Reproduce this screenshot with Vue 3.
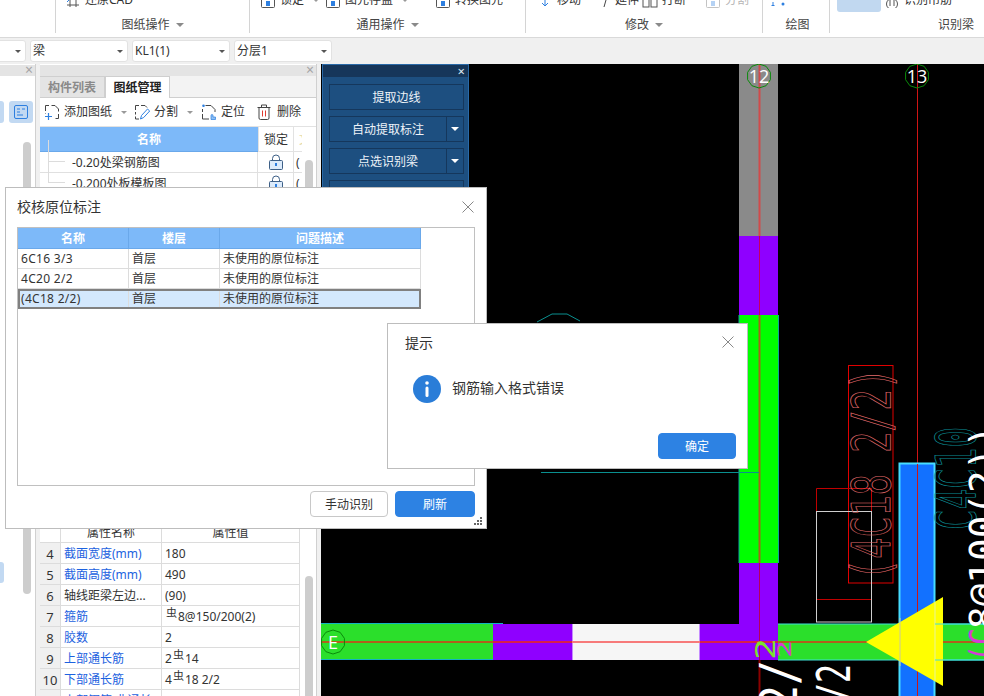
<script setup>
const ribbonGroups = [
  { name: 'undo', width: 56, label: '', items: [] },
  { name: 'drawing', width: 194, label: '图纸操作', caret: true, items: [{ icon: 'restore', text: '还原CAD', left: 9 }] },
  { name: 'common', width: 276, label: '通用操作', caret: true, items: [
    { icon: 'lock', text: '锁定', left: 10, more: true },
    { icon: 'store', text: '图元存盘', left: 75, more: true },
    { icon: 'swap', text: '转换图元', left: 185 }
  ] },
  { name: 'edit', width: 237, label: '修改', caret: true, items: [
    { icon: 'move', text: '移动', left: 11 },
    { icon: 'extend', text: '延伸', left: 69 },
    { icon: 'break', text: '打断', left: 116 },
    { icon: 'split', text: '分割', left: 179, off: true }
  ] },
  { name: 'draw', width: 67, label: '绘图', items: [{ icon: 'dots', text: '', left: 7 }] },
  { name: 'beam', width: 154, label: '识别梁', right: true, items: [{ icon: 'hanger', text: '识别吊筋', left: 54 }] }
]

const selects = [
  { text: '' },
  { text: '梁' },
  { text: 'KL1(1)' },
  { text: '分层1' }
]

const drawings = ['-0.20处梁钢筋图', '-0.200处板模板图']

const props = [
  { no: 4, name: '截面宽度(mm)', link: true, value: ['180'] },
  { no: 5, name: '截面高度(mm)', link: true, value: ['490'] },
  { no: 6, name: '轴线距梁左边...', value: ['(90)'] },
  { no: 7, name: '箍筋', link: true, value: ['', '8@150/200(2)'] },
  { no: 8, name: '胶数', link: true, value: ['2'] },
  { no: 9, name: '上部通长筋', link: true, value: ['2', '14'] },
  { no: 10, name: '下部通长筋', link: true, value: ['4', '18 2/2'] },
  { no: 11, name: '上部钢筋(非通长)', link: true, value: [''] }
]

const checks = [
  { name: '6C16 3/3', floor: '首层', issue: '未使用的原位标注' },
  { name: '4C20 2/2', floor: '首层', issue: '未使用的原位标注' },
  { name: '(4C18 2/2)', floor: '首层', issue: '未使用的原位标注', active: true }
]

const beamButtons = [
  { text: '提取边线' },
  { text: '自动提取标注', split: true },
  { text: '点选识别梁', split: true },
  { text: '' }
]

function bubble(cx, cy, r, n = 10) {
  const pts = []
  for (let i = 0; i < n; i++) {
    const a = (Math.PI * 2 * i) / n + Math.PI / n
    pts.push(`${(cx + r * Math.cos(a)).toFixed(1)},${(cy + r * Math.sin(a)).toFixed(1)}`)
  }
  return pts.join(' ')
}

const axes = [
  { x: 759, y: 76, label: '12' },
  { x: 917, y: 76, label: '13' },
  { x: 333, y: 642, label: 'E' }
]
</script>

<template>
  <div class="app">
    <header class="ribbon">
      <section
        v-for="g in ribbonGroups"
        :key="g.name"
        class="rib-group"
        :style="{ width: g.width + 'px' }"
      >
        <div class="rib-top">
          <span
            v-for="it in g.items"
            :key="it.icon"
            class="rib-item"
            :class="{ off: it.off }"
            :style="{ left: it.left + 'px' }"
          >
            <svg class="rib-ico" viewBox="0 0 16 16" fill="none" stroke="#555">
              <template v-if="it.icon === 'dots'">
                <path d="M3 11v4M1.500 14.500h3" stroke="#2d7fe0" />
                <circle cx="13" cy="13" r="1.500" fill="#2d7fe0" stroke="none" />
              </template>
              <template v-else-if="it.icon === 'extend'">
                <path d="M13 1 9 15" stroke="#444" />
              </template>
              <template v-else-if="it.icon === 'move'">
                <path d="M8 2v12M5 11l3 3 3-3" stroke="#2d7fe0" />
                <path d="M2 3h12" stroke="#777" />
              </template>
              <template v-else-if="it.icon === 'restore'">
                <path d="M2 13h12M5 15V7h6v8" />
                <path d="M2 10l3-3" stroke="#2d7fe0" />
              </template>
              <template v-else-if="it.icon === 'hanger'">
                <circle cx="8" cy="12" r="5.500" />
                <path d="M6 8v6M10 8v6" />
              </template>
              <template v-else-if="it.icon === 'break'">
                <rect x="1" y="4" width="6" height="11" />
                <rect x="9" y="4" width="6" height="11" />
              </template>
              <template v-else>
                <rect x="1.500" y="4.500" width="13" height="11" rx="1" />
                <rect x="6" y="9" width="4" height="5" fill="#2d7fe0" stroke="none" />
              </template>
            </svg>
            <span v-if="it.text" class="rib-text">{{ it.text }}</span>
            <i v-if="it.more" class="caret mini" />
          </span>
          <span v-if="g.name === 'beam'" class="rib-big" />
        </div>
        <div class="rib-label" :class="[{ right: g.right }, g.name]">
          {{ g.label }}<i v-if="g.caret" class="caret" />
        </div>
      </section>
    </header>

    <div class="selects">
      <div v-for="(s, i) in selects" :key="i" class="select">
        <span>{{ s.text }}</span><i class="caret dark" />
      </div>
    </div>

    <main class="work">
      <aside class="pane-left">
        <div class="pane-head"><span class="pane-x">×</span></div>
        <div class="left-tools">
          <span class="tool-chip cut" />
          <span class="tool-chip">
            <svg width="16" height="16" viewBox="0 0 16 16" fill="none" stroke="#2d7fe0">
              <rect x="1.500" y="1.500" width="13" height="13" rx="1.500" />
              <path d="M4 5h3M9 5h3M4 8h3M4 11h6" />
            </svg>
          </span>
        </div>
        <div class="left-scroll" />
        <div class="left-sel" />
      </aside>

      <div class="pane-mid">
        <div class="pane-head"><span class="pane-x">×</span></div>
        <div class="tabs">
          <span class="tab">构件列表</span>
          <span class="tab on">图纸管理</span>
        </div>
        <div class="mid-tools">
          <span class="mt mt-add">
            <svg width="16" height="16" viewBox="0 0 16 16" fill="none" stroke="#444">
              <path d="M1.500 7V1.500H5M7.500 1.500H11L14.500 5V7.500M14.500 10V14.500H11.500M1.500 9.500V10" />
              <path d="M1 12.500h7M4.500 9v7" stroke="#2d7fe0" stroke-width="1.200" />
            </svg>
            添加图纸<i class="caret mini" />
          </span>
          <span class="mt mt-split">
            <svg width="16" height="16" viewBox="0 0 16 16" fill="none" stroke="#444">
              <path d="M1.500 6V1.500H5M7 1.500H11L13 3.500M1.500 8V10.500M1.500 12.500V15H5" />
              <path d="M6.500 15l1-3.500 6-6.500 2.200 2-6 6.500z" stroke="#2d7fe0" />
            </svg>
            分割<i class="caret mini" />
          </span>
          <span class="mt mt-loc">
            <svg width="16" height="16" viewBox="0 0 16 16" fill="none" stroke="#444">
              <path d="M1.500 5V8M1.500 10V15H8M4.500 1.500H10L14 5.500V8" />
              <path d="M10 15v-3.500a1 1 0 0 1 2 0V13h2.500v2.500H10z" fill="#8ec0f5" stroke="#2d7fe0" stroke-width=".7" />
              <circle cx="2.500" cy="1.800" r="1.300" fill="#2d7fe0" stroke="none" />
            </svg>
            定位
          </span>
          <span class="mt mt-del">
            <svg width="14" height="16" viewBox="0 0 14 16" fill="none" stroke="#444">
              <path d="M.5 3.500h13M4.500 3.500V1h5v2.500M2 3.500v10.500a1.500 1.500 0 0 0 1.500 1.500h7a1.500 1.500 0 0 0 1.500-1.500V3.500" />
              <path d="M5.500 6.500v6M8.500 6.500v6" stroke="#e03c32" />
            </svg>
            删除
          </span>
        </div>
        <div class="sheet">
          <div class="sheet-head">
            <span class="sh-name">名称</span>
            <span class="sh-lock">锁定</span>
            <span class="sh-rest">文</span>
          </div>
          <div v-for="d in drawings" :key="d" class="sheet-row">
            <span class="sr-name"><i class="tree" />{{ d }}</span>
            <span class="sr-lock">
              <svg width="14" height="16" viewBox="0 0 14 16" fill="none" stroke="#3d5f86">
                <path d="M3.500 6.500V4.500a3.500 3.500 0 0 1 7 0v2" />
                <rect x=".5" y="6.500" width="13" height="9" rx="1" fill="#dcebfb" />
                <path d="M7 9v3" stroke="#2d7fe0" stroke-width="2" />
              </svg>
            </span>
            <span class="sr-rest">(</span>
          </div>
          <div class="sheet-scroll" />
        </div>
        <div class="prop-table">
          <div class="prop-row prop-head">
            <span class="p-no" />
            <span class="p-name">属性名称</span>
            <span class="p-val">属性值</span>
          </div>
          <div v-for="p in props" :key="p.no" class="prop-row">
            <span class="p-no">{{ p.no }}</span>
            <span class="p-name" :class="{ link: p.link }">{{ p.name }}</span>
            <span class="p-val">{{ p.value[0] }}<template v-if="p.value.length > 1"><sup class="rebar">虫</sup>{{ p.value[1] }}</template></span>
          </div>
          <div class="prop-scroll" />
        </div>
      </div>

      <div class="cad">
        <svg class="cad-svg" viewBox="321 64 663 632" width="663" height="632">
          <rect x="321" y="64" width="663" height="632" fill="#000" />
          <!-- wall -->
          <rect x="739" y="64" width="39" height="172" fill="#8a8a8a" />
          <rect x="739" y="236" width="39" height="79" fill="#8f00ff" />
          <rect x="739" y="315" width="39" height="248" fill="#00ff00" />
          <path d="M739 315V563M778.500 315V563" stroke="#0f9f9f" />
          <path d="M739 563H778V660H700V624H739Z" fill="#8f00ff" />
          <!-- beam -->
          <rect x="321" y="624" width="172" height="36" fill="#2bdf2b" />
          <path d="M321 623.500H503M321 659.500H503" stroke="#12b5c0" />
          <rect x="493" y="624" width="79" height="36" fill="#8f00ff" />
          <rect x="572" y="624" width="128" height="36" fill="#f6f6f6" />
          <path d="M572.500 624V660M699.500 624V660" stroke="#c58cff" />
          <rect x="778" y="624" width="206" height="36" fill="#2bdf2b" />
          <path d="M778 624H984M778 660H984" stroke="#3fe0d8" />
          <!-- axis lines -->
          <path d="M321 642H493" stroke="#b0601c" stroke-width="2" />
          <path d="M493 642H572M700 642H778" stroke="#d6204a" stroke-width="2" />
          <path d="M572 642H700" stroke="#f77a7a" stroke-width="2" />
          <path d="M778 642H984" stroke="#b0601c" stroke-width="2" />
          <path d="M759.500 64V236" stroke="#d14a4a" stroke-width="2" />
          <path d="M759.500 236V315" stroke="#c4005c" />
          <path d="M759.500 315V563" stroke="#a8601a" stroke-width="2" />
          <path d="M759.500 563V660" stroke="#b4005a" />
          <path d="M759.500 660V696" stroke="#8b0000" stroke-width="2" />
          <!-- teal leftovers -->
          <polyline points="537,322 552,314 567,314 580,321" fill="none" stroke="#0a8f8f" />
          <path d="M541 472.500H759" stroke="#0a8f8f" />
          <!-- detail boxes -->
          <rect x="848.500" y="365.500" width="44.500" height="217.500" fill="none" stroke="#e00000" />
          <path d="M816.500 511V488.500H871.500V511" fill="none" stroke="#c00000" />
          <rect x="816.500" y="511.500" width="55" height="110.500" fill="none" stroke="#cfcfcf" />
          <path d="M817 599.500H871" stroke="#c00000" />
          <path d="M917.500 64V463" stroke="#d01414" />
          <text class="cad-mono" transform="translate(890 580) rotate(-90)" font-size="54" textLength="212" lengthAdjust="spacingAndGlyphs" fill="none" stroke="#e06a6a" stroke-width=".8">(4C18 2/2)</text>
          <!-- column -->
          <rect x="899.500" y="463.500" width="35" height="240" fill="#1271ff" stroke="#46dcff" stroke-width="2" />
          <path d="M917.500 464V696" stroke="#d01414" />
          <path d="M866 642L943 597V686Z" fill="#ffff00" />
          <path d="M900 618V666" stroke="#c8c8a0" />
          <path d="M935 602V681" stroke="#e8f59a" />
          <path d="M935 624H984M935 660H984" stroke="#3fe0d8" />
          <!-- annotations -->
          <text class="cad-mono" transform="translate(975 530) rotate(-90)" font-size="56" textLength="103" lengthAdjust="spacingAndGlyphs" fill="none" stroke="#0c8f96" stroke-width=".8">C4C10</text>
          <text class="cad-mono" transform="translate(996 629) rotate(-90)" font-size="38" textLength="204" lengthAdjust="spacingAndGlyphs" fill="#fff">8@100(2))</text>
          <text class="cad-mono" transform="translate(996 662) rotate(-90)" font-size="38" textLength="34" lengthAdjust="spacingAndGlyphs" fill="#d63ad6">(C</text>
          <text class="cad-mono" transform="translate(775 660) rotate(-90)" font-size="26" textLength="22" lengthAdjust="spacingAndGlyphs" fill="#7be32c">2</text>
          <text class="cad-mono" transform="translate(791 658) rotate(-90)" font-size="20" textLength="18" lengthAdjust="spacingAndGlyphs" fill="#d63ad6">2</text>
          <text class="cad-mono" transform="translate(797 710) rotate(-90)" font-size="52" textLength="50" lengthAdjust="spacingAndGlyphs" fill="#fff">2/</text>
          <text class="cad-mono" transform="translate(850 702) rotate(-90)" font-size="46" textLength="38" lengthAdjust="spacingAndGlyphs" fill="#fff">/2</text>
          <!-- axis bubbles -->
          <g v-for="a in axes" :key="a.label">
            <polygon :points="bubble(a.x, a.y, 12)" fill="none" stroke="#0a8a0a" />
            <text class="cad-axis" :x="a.x" :y="a.y + 6.500" text-anchor="middle" fill="#fff">{{ a.label }}</text>
          </g>
        </svg>

        <div class="beam-panel">
          <div class="bp-head"><span>×</span></div>
          <div v-for="(b, i) in beamButtons" :key="i" class="bp-btn">
            <span class="bp-text">{{ b.text }}</span>
            <span v-if="b.split" class="bp-arrow"><i /></span>
          </div>
        </div>
      </div>
    </main>

    <div class="dlg dlg-check">
      <div class="dlg-title">校核原位标注</div>
      <svg class="dlg-x" width="12" height="12" viewBox="0 0 12 12" stroke="#888"><path d="M.5.5l11 11M11.500.5l-11 11" /></svg>
      <div class="grid-box">
        <div class="chk-row chk-head">
          <span>名称</span><span>楼层</span><span>问题描述</span>
        </div>
        <div v-for="c in checks" :key="c.name" class="chk-row" :class="{ active: c.active }">
          <span class="chk-name">{{ c.name }}</span><span>{{ c.floor }}</span><span>{{ c.issue }}</span>
        </div>
      </div>
      <div class="dlg-foot">
        <button class="btn">手动识别</button>
        <button class="btn primary">刷新</button>
      </div>
      <svg class="grip" width="9" height="9" viewBox="0 0 9 9" fill="#666">
        <rect x="6" y="0" width="2" height="2" />
        <rect x="3" y="3" width="2" height="2" /><rect x="6" y="3" width="2" height="2" />
        <rect x="0" y="6" width="2" height="2" /><rect x="3" y="6" width="2" height="2" /><rect x="6" y="6" width="2" height="2" />
      </svg>
    </div>

    <div class="dlg dlg-tip">
      <div class="dlg-title">提示</div>
      <svg class="dlg-x" width="12" height="12" viewBox="0 0 12 12" stroke="#888"><path d="M.5.5l11 11M11.500.5l-11 11" /></svg>
      <div class="tip-body">
        <svg width="28" height="28" viewBox="0 0 28 28">
          <circle cx="14" cy="14" r="14" fill="#2a7dd8" />
          <circle cx="14" cy="8" r="1.800" fill="#fff" />
          <rect x="12.500" y="11.500" width="3" height="10.500" rx="1.500" fill="#fff" />
        </svg>
        <span class="tip-msg">钢筋输入格式错误</span>
      </div>
      <button class="btn primary tip-ok">确定</button>
    </div>
  </div>
</template>

<style>
html, body { margin: 0; background: #f0f0f0; }
</style>

<style scoped>
.app {
  position: relative;
  width: 984px;
  height: 696px;
  overflow: hidden;
  display: flex;
  flex-direction: column;
  background: #f0f0f0;
  color: #333;
  font: 12px/18px "Noto Sans", "Noto Sans CJK SC", sans-serif;
}
.ribbon {
  display: flex;
  height: 37px;
  flex: none;
  background: #fff;
  border-bottom: 1px solid #d9d9d9;
}
.rib-group {
  position: relative;
  box-sizing: border-box;
  height: 33px;
  border-right: 1px solid #d4d4d4;
}
.rib-group:last-child { border-right: 0; }
.rib-top {
  position: relative;
  height: 14px;
  overflow: hidden;
}
.rib-item {
  position: absolute;
  top: -9px;
  display: flex;
  align-items: center;
  gap: 4px;
  white-space: nowrap;
}
.rib-item.off { color: #b5b5b5; }
.rib-item.off .rib-ico { opacity: .35; }
.rib-ico { width: 16px; height: 16px; flex: none; }
.rib-big {
  position: absolute;
  left: 7px;
  top: 0;
  width: 44px;
  height: 12px;
  background: #c1d8f0;
  border-radius: 0 0 3px 3px;
}
.rib-label {
  position: absolute;
  left: 0;
  right: 0;
  top: 16px;
  text-align: center;
  color: #444;
}
.rib-label.draw { padding-left: 3px; }
.rib-label.right { text-align: right; padding-right: 10px; }
.caret {
  display: inline-block;
  width: 0;
  height: 0;
  margin-left: 6px;
  vertical-align: 2px;
  border: 4px solid transparent;
  border-top: 4px solid #8a8a8a;
  border-bottom: 0;
}
.caret.mini {
  margin-left: 5px;
  border-width: 3px 3px 0;
  border-top-color: #999;
}
.caret.dark {
  border-width: 3px 3px 0;
  border-top-color: #555;
}
.selects {
  display: flex;
  gap: 4px;
  height: 26px;
  flex: none;
  box-sizing: border-box;
  padding-top: 2px;
  margin-left: -72px;
}
.select {
  box-sizing: border-box;
  display: flex;
  align-items: center;
  justify-content: space-between;
  width: 98px;
  height: 22px;
  padding: 0 4px 0 2px;
  background: #fff;
  border: 1px solid #e2e2e2;
  border-radius: 3px;
  font-size: 12px;
}
.work {
  position: relative;
  display: flex;
  flex: 1;
  min-height: 0;
  background: #f0f0f0;
}
.pane-left {
  position: relative;
  width: 35px;
  flex: none;
  background: #fff;
  border-right: 1px solid #d0d0d0;
}
.pane-head {
  position: relative;
  height: 11px;
  margin-top: 1px;
  background: #e4e4e4;
}
.pane-x {
  position: absolute;
  right: 2px;
  top: -4px;
  font-size: 14px;
  color: #a5a5a5;
}
.left-tools {
  display: flex;
  gap: 5px;
  margin: 25px 0 0 -16px;
}
.tool-chip {
  display: flex;
  align-items: center;
  justify-content: center;
  width: 24px;
  height: 22px;
  background: #c2d9f2;
  border-radius: 3px;
}
.tool-chip.cut { width: 20px; }
.left-scroll {
  position: absolute;
  left: 23px;
  top: 78px;
  width: 8px;
  height: 452px;
  background: #cdcdcd;
  border-radius: 4px;
}
.left-sel {
  position: absolute;
  left: 0;
  top: 498px;
  width: 4px;
  height: 21px;
  background: #c2d9f2;
  border-radius: 0 3px 3px 0;
}
.pane-mid {
  position: relative;
  width: 276px;
  margin-left: 4px;
  flex: none;
  background: #fff;
  border-right: 1px solid #d0d0d0;
  overflow: hidden;
}
.tabs {
  display: flex;
  height: 22px;
  background: #f3f3f3;
  border-bottom: 1px solid #cfcfcf;
  box-sizing: border-box;
}
.tab {
  box-sizing: border-box;
  width: 65px;
  text-align: center;
  line-height: 22px;
  font-weight: 700;
  color: #8a8a8a;
  background: #e4e4e4;
  border: 1px solid #cfcfcf;
  border-width: 1px 1px 0 0;
}
.tab.on { color: #222; background: #fff; border-left: 1px solid #cfcfcf; height: 22px; }
.mid-tools {
  display: flex;
  align-items: center;
  height: 29px;
  padding-left: 4px;
  border-bottom: 1px solid #e2e2e2;
  box-sizing: border-box;
}
.mt { display: flex; align-items: center; gap: 4px; white-space: nowrap; }
.mt-split { margin-left: 7px; }
.mt-loc { margin-left: 8px; }
.mt-del { margin-left: 12px; gap: 6px; }
.sheet {
  position: relative;
  height: 395px;
}
.sheet-head, .sheet-row {
  display: flex;
  width: 262px;
}
.sheet-head { height: 25px; line-height: 26px; box-sizing: border-box; border-bottom: 1px solid #e2e2e2; }
.sh-name {
  width: 218px;
  text-align: center;
  color: #fff;
  font-weight: 700;
  background: #7db9f9;
  border-bottom: 1px solid #6aa8ea;
  height: 25px;
  box-sizing: border-box;
}
.sh-lock { width: 36px; text-align: center; border-left: 1px solid #e2e2e2; box-sizing: border-box; border-right: 1px solid #e2e2e2; }
.sh-rest { width: 8px; padding-left: 5px; box-sizing: border-box; overflow: hidden; color: #e4d9a8; }
.sheet-row {
  height: 21px;
  line-height: 22px;
  box-sizing: border-box;
  border-bottom: 1px solid #e0e0e0;
}
.sr-name { position: relative; width: 218px; padding-left: 32px; box-sizing: border-box; border-right: 1px solid #e0e0e0; }
.tree {
  position: absolute;
  left: 8px;
  top: -12px;
  width: 16px;
  height: 21px;
  border: 1px solid #dcdcdc;
  border-width: 0 0 1px 1px;
}
.sr-lock { display: flex; justify-content: center; align-items: center; width: 36px; box-sizing: border-box; border-right: 1px solid #e0e0e0; }
.sr-rest { width: 8px; padding-left: 2px; overflow: hidden; box-sizing: border-box; }
.sheet-scroll {
  position: absolute;
  left: 265px;
  top: 33px;
  width: 8px;
  height: 300px;
  background: #cdcdcd;
  border-radius: 4px;
}
.prop-table { position: relative; }
.prop-row {
  display: grid;
  grid-template-columns: 21px 101px 137px;
  width: 260px;
  height: 21px;
  line-height: 22px;
  box-sizing: border-box;
  border-bottom: 1px solid #dcdcdc;
  border-right: 1px solid #dcdcdc;
}
.p-no {
  text-align: center;
  background: #f0f0f0;
  border-right: 1px solid #dcdcdc;
  font-size: 13px;
  height: 20px;
}
.prop-head .p-no { background: #fff; }
.prop-head .p-name, .prop-head .p-val { text-align: center; padding: 0; }
.p-name {
  padding-left: 3px;
  border-right: 1px solid #dcdcdc;
  white-space: nowrap;
  overflow: hidden;
  height: 20px;
}
.p-name.link { color: #1c62e0; }
.p-val { padding-left: 3px; white-space: nowrap; height: 20px; }
.rebar { font-size: 11px; line-height: 0; vertical-align: 4px; margin: 0 1px; }
.prop-scroll {
  position: absolute;
  left: 265px;
  top: 54px;
  width: 8px;
  height: 300px;
  background: #cdcdcd;
  border-radius: 4px;
}
.cad {
  position: relative;
  flex: 1;
  margin-left: 4px;
  min-width: 0;
  overflow: hidden;
}
.cad-svg { display: block; }
.cad-mono { font-family: "DejaVu Sans Mono", "Liberation Mono", monospace; }
.cad-axis { font: 18px "Open Sans", sans-serif; }
.beam-panel {
  position: absolute;
  left: 1px;
  top: 0;
  box-sizing: border-box;
  width: 147px;
  height: 150px;
  background: #1d4f80;
  border: 1px solid #2a6aa8;
}
.bp-head {
  position: relative;
  height: 12px;
  margin-bottom: 7px;
  background: #16365a;
  color: #dfe8f1;
  font-size: 13px;
  line-height: 12px;
  text-align: right;
  padding-right: 3px;
  box-sizing: border-box;
}
.bp-btn {
  display: flex;
  box-sizing: border-box;
  width: 135px;
  height: 26px;
  margin: 0 0 6px 6px;
  color: #eef3f8;
  line-height: 26px;
  border: 1px solid #15375c;
}
.bp-text { flex: 1; text-align: center; }
.bp-arrow {
  display: flex;
  align-items: center;
  justify-content: center;
  width: 16px;
  border-left: 1px solid #15375c;
}
.bp-arrow i {
  width: 0;
  height: 0;
  border: 4px solid transparent;
  border-top: 4px solid #fff;
  border-bottom: 0;
}
.dlg {
  position: absolute;
  box-sizing: border-box;
  background: #fff;
  border: 1px solid #bdbdbd;
}
.dlg-check { left: 5px; top: 187px; width: 482px; height: 342px; }
.dlg-tip { left: 387px; top: 323px; width: 361px; height: 146px; }
.dlg-title {
  position: absolute;
  left: 11px;
  top: 9px;
  font-size: 14px;
  line-height: 20px;
}
.dlg-tip .dlg-title { left: 17px; top: 9px; }
.dlg-x { position: absolute; right: 12px; top: 13px; }
.dlg-tip .dlg-x { right: 13px; top: 12px; }
.grid-box {
  position: absolute;
  left: 11px;
  top: 39px;
  box-sizing: border-box;
  width: 458px;
  height: 259px;
  border: 1px solid #c0c0c0;
}
.chk-row {
  display: grid;
  grid-template-columns: 111px 91px 201px;
  width: 403px;
  height: 20px;
  line-height: 19px;
  box-sizing: border-box;
  border-bottom: 1px solid #dcdcdc;
}
.chk-row span {
  padding-left: 3px;
  border-right: 1px solid #dcdcdc;
  white-space: nowrap;
}
.chk-row .chk-name { letter-spacing: .3px; }
.chk-head {
  height: 21px;
  line-height: 21px;
  background: #7db9f9;
  color: #fff;
  font-weight: 700;
  text-align: center;
  border-bottom: 1px solid #6aa8ea;
}
.chk-head span { padding: 0; border-right: 1px solid #6aa8ea; }
.chk-row.active {
  background: #d3e8fd;
  outline: 2px solid #808080;
  outline-offset: -2px;
  border-bottom: 0;
}
.dlg-foot {
  position: absolute;
  right: 11px;
  top: 303px;
  display: flex;
  gap: 7px;
}
.btn {
  box-sizing: border-box;
  width: 78px;
  height: 26px;
  padding: 2px 0 0;
  background: #fff;
  border: 1px solid #c8c8c8;
  border-radius: 4px;
  color: #333;
  font: 12px/18px "Noto Sans", "Noto Sans CJK SC", sans-serif;
}
.btn.primary {
  width: 80px;
  background: #2d82e3;
  border-color: #2d82e3;
  color: #fff;
}
.grip { position: absolute; right: 3px; bottom: 2px; }
.tip-body {
  position: absolute;
  left: 25px;
  top: 51px;
  display: flex;
  align-items: center;
  gap: 11px;
  font-size: 14px;
  line-height: 28px;
}
.tip-msg { margin-top: -2px; }
.btn.tip-ok { position: absolute; right: 11px; top: 109px; width: 78px; }
</style>
